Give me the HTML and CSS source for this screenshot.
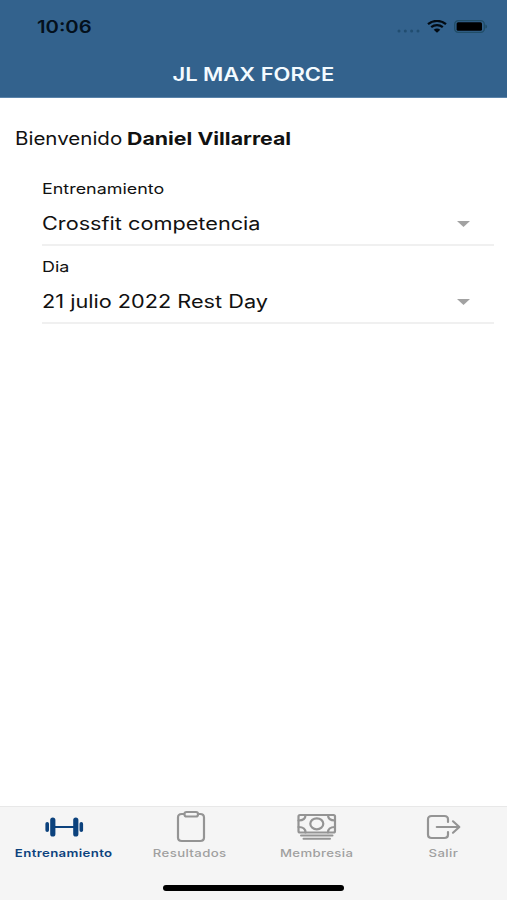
FILE: index.html
```html
<!DOCTYPE html>
<html lang="es">
<head>
  <meta charset="UTF-8">
  <meta name="viewport" content="width=device-width, initial-scale=1">
  <title>JL MAX FORCE</title>
  <link rel="stylesheet" href="styles.css">
</head>
<body>
  <header class="header">
    <div class="status-bar">
      <span class="hora wide">10:06</span>
      <div class="status-icons">
        <svg class="signal" width="24" height="4" viewBox="0 0 24 4">
          <circle cx="2" cy="2" r="1.5"/><circle cx="8.3" cy="2" r="1.5"/><circle cx="14.6" cy="2" r="1.5"/><circle cx="21" cy="2" r="1.5"/>
        </svg>
        <svg class="wifi" width="20" height="13" viewBox="0 0 20 13">
          <path d="M1 4.2C6-.2 14-.2 19 4.2M4.2 7.2c3.4-2.9 8.2-2.9 11.6 0"/>
          <path class="fill" d="M6.7 9.7c2-1.6 4.6-1.6 6.6 0L10 12.7z"/>
        </svg>
        <svg class="battery" width="34" height="13" viewBox="0 0 34 13">
          <rect class="case" x=".7" y=".7" width="29.6" height="11.6" rx="3.6"/>
          <rect x="2.6" y="2.2" width="25.4" height="8.6" rx="1.5"/>
          <path class="tip" d="M31.3 4.4c2.4.6 2.4 3.6 0 4.2z"/>
        </svg>
      </div>
    </div>
    <h1 class="titulo"><span class="wide">JL MAX FORCE</span></h1>
  </header>

  <main class="content">
    <p class="bienvenida"><span class="wide saludo">Bienvenido</span><b class="wide nombre">Daniel Villarreal</b></p>

    <div class="campo">
      <div class="label"><span class="wide">Entrenamiento</span></div>
      <div class="select">
        <span class="wide">Crossfit competencia</span>
        <svg class="flecha" width="13" height="6" viewBox="0 0 13 6"><path d="M0 0h13L6.5 6z"/></svg>
      </div>
    </div>

    <div class="campo">
      <div class="label"><span class="wide">Dia</span></div>
      <div class="select">
        <span class="wide">21 julio 2022 Rest Day</span>
        <svg class="flecha" width="13" height="6" viewBox="0 0 13 6"><path d="M0 0h13L6.5 6z"/></svg>
      </div>
    </div>
  </main>

  <footer class="footer">
    <nav class="tabs">
      <a class="tab active">
        <svg class="icon" width="50" height="36" viewBox="0 0 50 36">
          <path class="barra" d="M15 19h23"/>
          <path class="disco" d="M14.800 12v14M37.800 12v14"/>
          <path class="disco-chico" d="M9.200 15.700v6.600M43.300 15.700v6.600"/>
        </svg>
        <span class="wide">Entrenamiento</span>
      </a>
      <a class="tab">
        <svg class="icon" width="50" height="36" viewBox="0 0 50 36">
          <path d="M19 6h-2.200c-2.500 0-3.800 1.200-3.800 3.400v20.200c0 2.200 1.300 3.400 3.800 3.400h18.400c2.500 0 3.800-1.200 3.800-3.400V9.400c0-2.200-1.300-3.400-3.800-3.400H33"/>
          <rect x="19.500" y="4" width="13.500" height="4.500" rx="2"/>
        </svg>
        <span class="wide">Resultados</span>
      </a>
      <a class="tab">
        <svg class="icon" width="50" height="36" viewBox="0 0 50 36">
          <rect x="6.500" y="7" width="36.500" height="17.500" rx="1.500"/>
          <ellipse cx="24.800" cy="15.800" rx="6.500" ry="5.500"/>
          <path d="M13.500 7c0 3.500-2.800 5.500-7 5.500M36 7c0 3.500 2.800 5.500 7 5.500M6.500 19c4.200 0 7 2 7 5.500M43 19c-4.200 0-7 2-7 5.500"/>
          <path class="fino" d="M9 27.500H40.500M11.500 30.700h26.500"/>
        </svg>
        <span class="wide">Membresia</span>
      </a>
      <a class="tab">
        <svg class="icon" width="50" height="36" viewBox="0 0 50 36">
          <path d="M29 14v-2.500c0-2.200-1.300-3.500-3.700-3.500H12.700C10.300 8 9 9.300 9 11.500v15c0 2.200 1.300 3.500 3.700 3.500h12.600c2.400 0 3.700-1.300 3.700-3.500V24"/>
          <path d="M17.800 19H40M34 13.300l6.300 5.700-6.300 5.700"/>
        </svg>
        <span class="wide">Salir</span>
      </a>
    </nav>
    <div class="home-indicator"></div>
  </footer>
</body>
</html>
```

FILE: styles.css
```css
:root {
  --azul: #33628d;
  --azul-activo: #0c427d;
  --gris: #949494;
  --linea: #e8e8e8;
}

* {
  box-sizing: border-box;
}

body {
  margin: 0;
  height: 900px;
  display: flex;
  flex-direction: column;
  background: #fff;
  color: #111;
  font-family: Inter, "Liberation Sans", sans-serif;
  overflow: hidden;
}

.wide {
  display: inline-block;
  white-space: nowrap;
  transform: scaleX(1.205);
  transform-origin: left center;
}

.header {
  height: 98px;
  background: var(--azul);
  border-bottom: 1px solid #5a83aa;
}

.status-bar {
  height: 53px;
  padding: 0 19px 0 37px;
  display: flex;
  justify-content: space-between;
  align-items: center;
}

.hora {
  font-size: 17px;
  font-weight: 600;
  color: #04101c;
  transform: scaleX(1.19);
}

.status-icons {
  display: flex;
  align-items: center;
}

.signal {
  margin: 8px 6px 0 0;
  fill: #214d70;
}

.wifi {
  margin-right: 7px;
  fill: none;
  stroke: #020a12;
  stroke-width: 2.2;
}

.wifi .fill {
  fill: #020a12;
  stroke: none;
}

.battery .case {
  fill: none;
  stroke: #214d67;
  stroke-width: 1.3;
}

.battery .tip {
  fill: #214d67;
}

.titulo {
  margin: 0;
  height: 43px;
  line-height: 43px;
  text-align: center;
  font-size: 18px;
  font-weight: 600;
  color: #f4fbff;
}

.titulo .wide {
  transform: scaleX(1.22);
  transform-origin: center;
}

.content {
  flex: 1;
  padding: 27px 13px 0 15px;
}

.bienvenida {
  margin: 0 0 24px;
  height: 27px;
  line-height: 27px;
  font-size: 18px;
  display: flex;
}

.saludo {
  width: 112px;
  transform: scaleX(1.14);
}

.nombre {
  transform: scaleX(1.185);
}

.campo {
  height: 70px;
  margin: 0 0 8px 27px;
  border-bottom: 2px solid #f0f0f0;
}

.label {
  height: 25px;
  line-height: 25px;
  font-size: 14.5px;
}

.label .wide {
  transform: scaleX(1.235);
}

.select {
  height: 46px;
  line-height: 46px;
  padding-right: 24px;
  display: flex;
  justify-content: space-between;
  align-items: center;
  font-size: 18px;
}

.flecha {
  fill: #a2a2a2;
}

.footer {
  height: 94px;
  background: #f5f5f5;
  border-top: 1px solid var(--linea);
}

.tabs {
  height: 78px;
  display: flex;
}

.tab {
  flex: 1;
  padding-top: 1px;
  display: flex;
  flex-direction: column;
  align-items: center;
  color: #a0a0a0;
  font-size: 11px;
  font-weight: 500;
  line-height: 16px;
}

.tab .wide {
  transform: scaleX(1.2);
  transform-origin: center;
  margin-top: 1px;
  letter-spacing: 0.3px;
}

.icon {
  fill: none;
  stroke: var(--gris);
  stroke-width: 2.2;
  stroke-linecap: round;
  stroke-linejoin: round;
}

.icon .fino {
  stroke-width: 2;
}

.active {
  color: var(--azul-activo);
  font-weight: 600;
}

.tab.active .wide {
  margin-left: 1px;
}

.active .icon {
  stroke: var(--azul-activo);
}

.active .disco {
  stroke-width: 5.2;
}

.active .disco-chico {
  stroke-width: 3.6;
}

.home-indicator {
  width: 181px;
  height: 6px;
  margin: 0 auto;
  border-radius: 3px;
  background: #000;
}
```
